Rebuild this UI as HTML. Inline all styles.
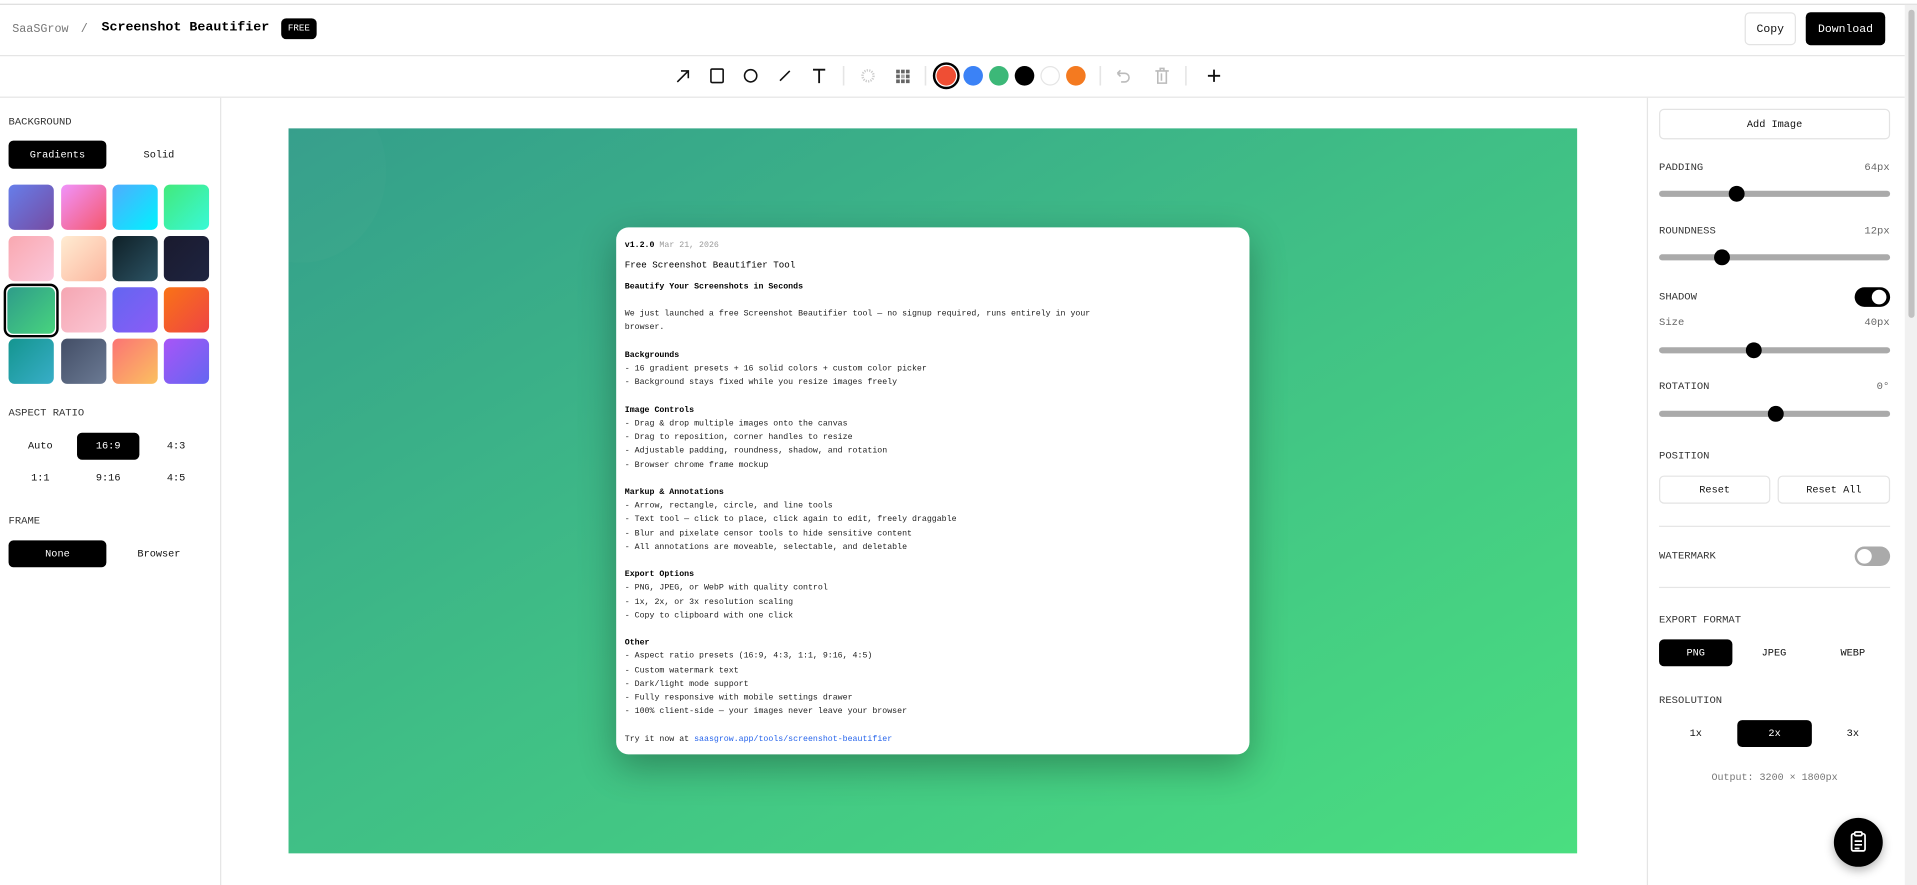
<!DOCTYPE html>
<html><head><meta charset="utf-8"><style>
*{box-sizing:border-box;margin:0;padding:0}
html,body{width:1917px;height:885px;overflow:hidden;background:#fff}
#w{position:absolute;left:0;top:0;width:1568px;height:724px;transform:scale(1.22258);transform-origin:0 0;font-family:"Liberation Mono",monospace;color:#111}
.a{position:absolute}
.lbl{position:absolute;font-size:8.6px;color:#333}
.btn{position:absolute;font-size:8.4px;display:flex;align-items:center;justify-content:center;border-radius:4px}
.blk{background:#000;color:#fff}
.out{border:1px solid #e3e3e3;background:#fff}
.sw{position:absolute;width:37px;height:37px;border-radius:5px}
.sl{position:absolute;left:1357px;width:189px;height:5px;border-radius:3px;background:#aaa}
.kn{position:absolute;top:-4px;width:13px;height:13px;border-radius:50%;background:#000}
.dot{position:absolute;top:54px;width:16px;height:16px;border-radius:50%}
.card{position:absolute;left:504px;top:186px;width:518px;height:431px;background:#fff;border-radius:10px;box-shadow:0 10px 30px rgba(0,0,0,.3)}
.t{position:absolute;left:7px;font-size:6.75px;white-space:pre;color:#222;line-height:11.2px}
.b{font-weight:bold;color:#000}
</style></head><body><div id="w">
<div class="a" style="left:0;top:3px;width:1568px;height:1px;background:#ddd"></div>
<div class="a" style="left:0;top:45px;width:1558px;height:1px;background:#e5e5e5"></div>
<div class="a" style="left:0;top:79px;width:1558px;height:1px;background:#e5e5e5"></div>
<div class="a" style="left:1558px;top:4px;width:10px;height:720px;background:#f1f1f1"></div>
<div class="a" style="left:1561px;top:8px;width:5px;height:252px;background:#c1c1c1;border-radius:3px"></div>
<div class="a" style="left:10px;top:18px;font-size:9.6px;color:#777">SaaSGrow</div>
<div class="a" style="left:66px;top:18px;font-size:9.6px;color:#777">/</div>
<div class="a" style="left:83px;top:17px;font-size:10.9px;font-weight:bold;color:#000">Screenshot Beautifier</div>
<div class="btn blk" style="left:230px;top:15px;width:29px;height:17px;font-size:7.5px">FREE</div>
<div class="btn out" style="left:1427px;top:10px;width:42px;height:27px;font-size:9.4px">Copy</div>
<div class="btn blk" style="left:1477px;top:10px;width:65px;height:27px;font-size:9.4px">Download</div>
<svg class="a" style="left:550px;top:54px" width="460" height="16" viewBox="550 54 460 16" fill="none" stroke="#111" stroke-width="1.3">
<path d="M554 67L563 58M557 58H563V64"/>
<rect x="581.5" y="56.5" width="10" height="11" rx="1"/>
<circle cx="614" cy="62" r="5"/>
<path d="M638 66L646 58"/>
<path d="M665 57H675M670 57V68" stroke-width="1.5"/>
<line x1="690" y1="54" x2="690" y2="70" stroke="#e5e5e5"/>
<circle cx="710" cy="62" r="4.5" stroke="#ccc" stroke-width="2" stroke-dasharray="1 1"/>
<g fill="#666" stroke="none"><rect x="733" y="57" width="3" height="3"/><rect x="737" y="57" width="3" height="3"/><rect x="741" y="57" width="3" height="3"/><rect x="733" y="61" width="3" height="3"/><rect x="741" y="61" width="3" height="3"/><rect x="733" y="65" width="3" height="3"/><rect x="737" y="65" width="3" height="3"/><rect x="741" y="65" width="3" height="3"/><rect x="737" y="61" width="3" height="3" fill="#aaa"/></g>
<line x1="757" y1="54" x2="757" y2="70" stroke="#e5e5e5"/>
<line x1="900" y1="54" x2="900" y2="70" stroke="#e5e5e5"/>
<path d="M914 60H920A3.5 3.5 0 0 1 920 67H917M914 60L916.5 57.5M914 60L916.5 62.5" stroke="#bbb"/>
<path d="M945 58H956M947 58V68H954V58M949 58V56H952V58M950 60V66" stroke="#bbb"/>
<line x1="970" y1="54" x2="970" y2="70" stroke="#e5e5e5"/>
<path d="M993 57V67M988 62H998" stroke-width="1.5"/>
</svg>
<div class="a" style="left:763px;top:51px;width:22px;height:22px;border-radius:50%;border:2px solid #000;background:#fff"></div>
<div class="a" style="left:766px;top:54px;width:16px;height:16px;border-radius:50%;background:#ef4e34"></div>
<div class="dot" style="left:788px;background:#3b82f6"></div>
<div class="dot" style="left:809px;background:#3cb878"></div>
<div class="dot" style="left:830px;background:#000"></div>
<div class="dot" style="left:851px;background:#fff;border:1px solid #e5e5e5"></div>
<div class="dot" style="left:872px;background:#f47a20"></div>
<div class="a" style="left:180px;top:80px;width:1px;height:644px;background:#e5e5e5"></div>
<div class="lbl" style="left:7px;top:95px">BACKGROUND</div>
<div class="btn blk" style="left:7px;top:115px;width:80px;height:23px">Gradients</div>
<div class="btn" style="left:90px;top:115px;width:80px;height:23px">Solid</div>
<div class="sw" style="left:7px;top:151px;background:linear-gradient(135deg,#667eea,#764ba2)"></div>
<div class="sw" style="left:50px;top:151px;background:linear-gradient(135deg,#f093fb,#f5576c)"></div>
<div class="sw" style="left:92px;top:151px;background:linear-gradient(135deg,#4facfe,#00f2fe)"></div>
<div class="sw" style="left:134px;top:151px;background:linear-gradient(135deg,#43e97b,#38f9d7)"></div>
<div class="sw" style="left:7px;top:193px;background:linear-gradient(135deg,#f9a8b0,#fbc8dc)"></div>
<div class="sw" style="left:50px;top:193px;background:linear-gradient(135deg,#ffecd2,#fcb69f)"></div>
<div class="sw" style="left:92px;top:193px;background:linear-gradient(135deg,#0f2027,#2c5364)"></div>
<div class="sw" style="left:134px;top:193px;background:linear-gradient(135deg,#1a1a2e,#1e2440)"></div>
<div class="a" style="left:3px;top:232px;width:45px;height:44px;border:2px solid #000;border-radius:7px"></div>
<div class="sw" style="left:6px;top:235px;width:39px;height:38px;background:linear-gradient(135deg,#2e9c8a,#48d47e)"></div>
<div class="sw" style="left:50px;top:235px;background:linear-gradient(135deg,#f5a6b2,#fbc6d4)"></div>
<div class="sw" style="left:92px;top:235px;background:linear-gradient(135deg,#6366f1,#8b5cf6)"></div>
<div class="sw" style="left:134px;top:235px;background:linear-gradient(135deg,#f97316,#ef4444)"></div>
<div class="sw" style="left:7px;top:277px;background:linear-gradient(135deg,#14958f,#38aec8)"></div>
<div class="sw" style="left:50px;top:277px;background:linear-gradient(135deg,#434e66,#6b7a94)"></div>
<div class="sw" style="left:92px;top:277px;background:linear-gradient(135deg,#fb7474,#fbc060)"></div>
<div class="sw" style="left:134px;top:277px;background:linear-gradient(135deg,#a855f7,#6366f1)"></div>
<div class="lbl" style="left:7px;top:333px">ASPECT RATIO</div>
<div class="btn" style="left:7px;top:354px;width:52px;height:22px">Auto</div>
<div class="btn blk" style="left:63px;top:354px;width:51px;height:22px">16:9</div>
<div class="btn" style="left:118px;top:354px;width:52px;height:22px">4:3</div>
<div class="btn" style="left:7px;top:380px;width:52px;height:22px">1:1</div>
<div class="btn" style="left:63px;top:380px;width:51px;height:22px">9:16</div>
<div class="btn" style="left:118px;top:380px;width:52px;height:22px">4:5</div>
<div class="lbl" style="left:7px;top:421px">FRAME</div>
<div class="btn blk" style="left:7px;top:442px;width:80px;height:22px">None</div>
<div class="btn" style="left:90px;top:442px;width:80px;height:22px">Browser</div>
<div class="a" style="left:236px;top:105px;width:1054px;height:593px;background:linear-gradient(150deg,#349e8b 0%,#3fbd86 45%,#4ade80 100%);overflow:hidden">
<div class="a" style="left:-60px;top:-40px;width:140px;height:150px;border-radius:50%;background:rgba(255,255,255,.015)"></div></div>
<div class="card">
<div class="t" style="top:10px"><span class="b">v1.2.0</span> <span style="color:#999">Mar 21, 2026</span></div>
<div class="t" style="top:27px;font-size:7.5px;color:#000">Free Screenshot Beautifier Tool</div>
<div class="t b" style="top:44px">Beautify Your Screenshots in Seconds</div>
<div class="t" style="top:66px">We just launched a free Screenshot Beautifier tool — no signup required, runs entirely in your
browser.</div>
<div class="t" style="top:100px"><span class="b">Backgrounds</span>
- 16 gradient presets + 16 solid colors + custom color picker
- Background stays fixed while you resize images freely

<span class="b">Image Controls</span>
- Drag &amp; drop multiple images onto the canvas
- Drag to reposition, corner handles to resize
- Adjustable padding, roundness, shadow, and rotation
- Browser chrome frame mockup

<span class="b">Markup &amp; Annotations</span>
- Arrow, rectangle, circle, and line tools
- Text tool — click to place, click again to edit, freely draggable
- Blur and pixelate censor tools to hide sensitive content
- All annotations are moveable, selectable, and deletable

<span class="b">Export Options</span>
- PNG, JPEG, or WebP with quality control
- 1x, 2x, or 3x resolution scaling
- Copy to clipboard with one click

<span class="b">Other</span>
- Aspect ratio presets (16:9, 4:3, 1:1, 9:16, 4:5)
- Custom watermark text
- Dark/light mode support
- Fully responsive with mobile settings drawer
- 100% client-side — your images never leave your browser

Try it now at <span style="color:#2563eb">saasgrow.app/tools/screenshot-beautifier</span></div>
</div>
<div class="a" style="left:1347px;top:80px;width:1px;height:644px;background:#e5e5e5"></div>
<div class="btn out" style="left:1357px;top:89px;width:189px;height:25px">Add Image</div>
<div class="lbl" style="left:1357px;top:132px">PADDING</div><div class="lbl" style="left:1525px;top:132px;color:#666">64px</div>
<div class="sl" style="top:156px"><div class="kn" style="left:57px"></div></div>
<div class="lbl" style="left:1357px;top:184px">ROUNDNESS</div><div class="lbl" style="left:1525px;top:184px;color:#666">12px</div>
<div class="sl" style="top:208px"><div class="kn" style="left:45px"></div></div>
<div class="lbl" style="left:1357px;top:238px">SHADOW</div>
<div class="a" style="left:1517px;top:235px;width:29px;height:16px;border-radius:8px;background:#000"><div class="a" style="left:14px;top:2px;width:12px;height:12px;border-radius:50%;background:#fff"></div></div>
<div class="lbl" style="left:1357px;top:259px;color:#666">Size</div><div class="lbl" style="left:1525px;top:259px;color:#666">40px</div>
<div class="sl" style="top:284px"><div class="kn" style="left:71px"></div></div>
<div class="lbl" style="left:1357px;top:311px">ROTATION</div><div class="lbl" style="left:1535px;top:311px;color:#666">0°</div>
<div class="sl" style="top:336px"><div class="kn" style="left:89px"></div></div>
<div class="lbl" style="left:1357px;top:368px">POSITION</div>
<div class="btn out" style="left:1357px;top:389px;width:91px;height:23px">Reset</div>
<div class="btn out" style="left:1454px;top:389px;width:92px;height:23px">Reset All</div>
<div class="a" style="left:1357px;top:430px;width:189px;height:1px;background:#e5e5e5"></div>
<div class="lbl" style="left:1357px;top:450px">WATERMARK</div>
<div class="a" style="left:1517px;top:447px;width:29px;height:16px;border-radius:8px;background:#aaa"><div class="a" style="left:2px;top:2px;width:12px;height:12px;border-radius:50%;background:#fff"></div></div>
<div class="a" style="left:1357px;top:480px;width:189px;height:1px;background:#e5e5e5"></div>
<div class="lbl" style="left:1357px;top:502px">EXPORT FORMAT</div>
<div class="btn blk" style="left:1357px;top:523px;width:60px;height:22px">PNG</div>
<div class="btn" style="left:1421px;top:523px;width:60px;height:22px">JPEG</div>
<div class="btn" style="left:1485px;top:523px;width:61px;height:22px">WEBP</div>
<div class="lbl" style="left:1357px;top:568px">RESOLUTION</div>
<div class="btn" style="left:1357px;top:589px;width:60px;height:22px">1x</div>
<div class="btn blk" style="left:1421px;top:589px;width:61px;height:22px">2x</div>
<div class="btn" style="left:1485px;top:589px;width:61px;height:22px">3x</div>
<div class="a" style="left:1357px;top:632px;width:189px;text-align:center;font-size:8.2px;color:#777">Output: 3200 × 1800px</div>
<div class="a" style="left:1500px;top:669px;width:40px;height:40px;border-radius:50%;background:#000;box-shadow:0 3px 8px rgba(0,0,0,.3)">
<svg width="40" height="40" viewBox="0 0 40 40" fill="none" stroke="#fff" stroke-width="1.4"><rect x="14.5" y="13" width="11" height="14" rx="1.5"/><rect x="17" y="11.5" width="6" height="3" rx="1" fill="#000"/><path d="M17 19H23M17 22H23M17 25H21"/></svg></div>
</div></body></html>
